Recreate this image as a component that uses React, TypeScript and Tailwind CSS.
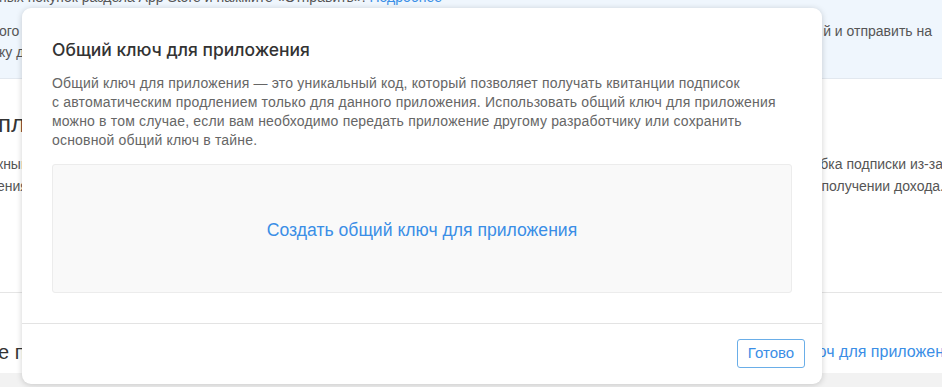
export default function App() {
  const font = { fontFamily: '"Liberation Sans", Arial, sans-serif' };
  return (
    <div className="relative w-[942px] h-[387px] overflow-hidden bg-[#f2f2f2] text-[#555]" style={font}>
      {/* page behind the dialog */}
      <div className="bg-white h-[373px] flex flex-col">
        <div className="h-[79px] bg-[#eff6fd] border-b border-[#e2e8ef] text-[14px] leading-[21px] overflow-hidden">
          <div className="-mt-[13px] -ml-[1px] whitespace-nowrap">
            ных покупок раздела App Store и нажмите «Отправить». <span className="text-[#3a8ee6]">Подробнее</span>
          </div>
          <div className="flex justify-between mt-[13px] whitespace-nowrap">
            <span className="-ml-[1px]">ого</span>
            <span className="mr-[10px]">й и отправить на</span>
          </div>
          <div className="flex justify-between whitespace-nowrap">
            <span className="-ml-[1px]">ку д</span>
            <span />
          </div>
        </div>
        <div className="h-[214px] border-b border-[#e5e5e5] pt-[30px]">
          <div className="text-[24px] leading-[30px] text-[#333] -ml-[2px]">пла</div>
          <div className="mt-[14px] text-[14px] leading-[22px]">
            <div className="flex justify-between whitespace-nowrap">
              <span className="-ml-[3px]">кный</span>
              <span className="-mr-[1px]">ошибка подписки из-за</span>
            </div>
            <div className="flex justify-between whitespace-nowrap">
              <span className="-ml-[3px]">ения</span>
              <span className="-mr-[2px]">о получении дохода.</span>
            </div>
          </div>
        </div>
        <div className="flex justify-between items-center pt-[44px] whitespace-nowrap">
          <span className="text-[20px] text-[#333] -ml-[2px]">е п</span>
          <span className="text-[16px] text-[#3a8ee6] -mr-[2px]">ключ для приложен</span>
        </div>
      </div>

      {/* dialog */}
      <div className="absolute left-[22px] top-[8px] w-[800px] h-[376px] rounded-[9px] bg-white shadow-[0_1px_6px_rgba(0,0,0,0.18)] flex flex-col">
        <div className="px-[30px] pt-[30px] flex-1">
          <h2
            className="text-[17.5px] leading-[24px] font-medium text-[#333]"
            style={{ fontFamily: 'Inter, "Liberation Sans", sans-serif' }}
          >
            Общий ключ для приложения
          </h2>
          <p className="mt-[12px] text-[14px] tracking-[0.18px] leading-[19px] text-[#666]">
            Общий ключ для приложения — это уникальный код, который позволяет получать квитанции подписок
            <br />с автоматическим продлением только для данного приложения. Использовать общий ключ для приложения
            <br />можно в том случае, если вам необходимо передать приложение другому разработчику или сохранить
            <br />основной общий ключ в тайне.
          </p>
          <div className="mt-[14px] h-[129px] rounded-[3px] border border-[#ececec] bg-[#f9f9f9] flex items-center justify-center">
            <button className="text-[17.6px] text-[#3a8ee6] mt-[3px]">Создать общий ключ для приложения</button>
          </div>
        </div>
        <div className="border-t border-[#e3e3e3] h-[61px] flex items-start justify-end pt-[15px] pr-[17px]">
          <button className="h-[29px] w-[68px] rounded-[3px] border border-[#6aaee8] text-[15px] text-[#3a8ee6]">Готово</button>
        </div>
      </div>
    </div>
  );
}
